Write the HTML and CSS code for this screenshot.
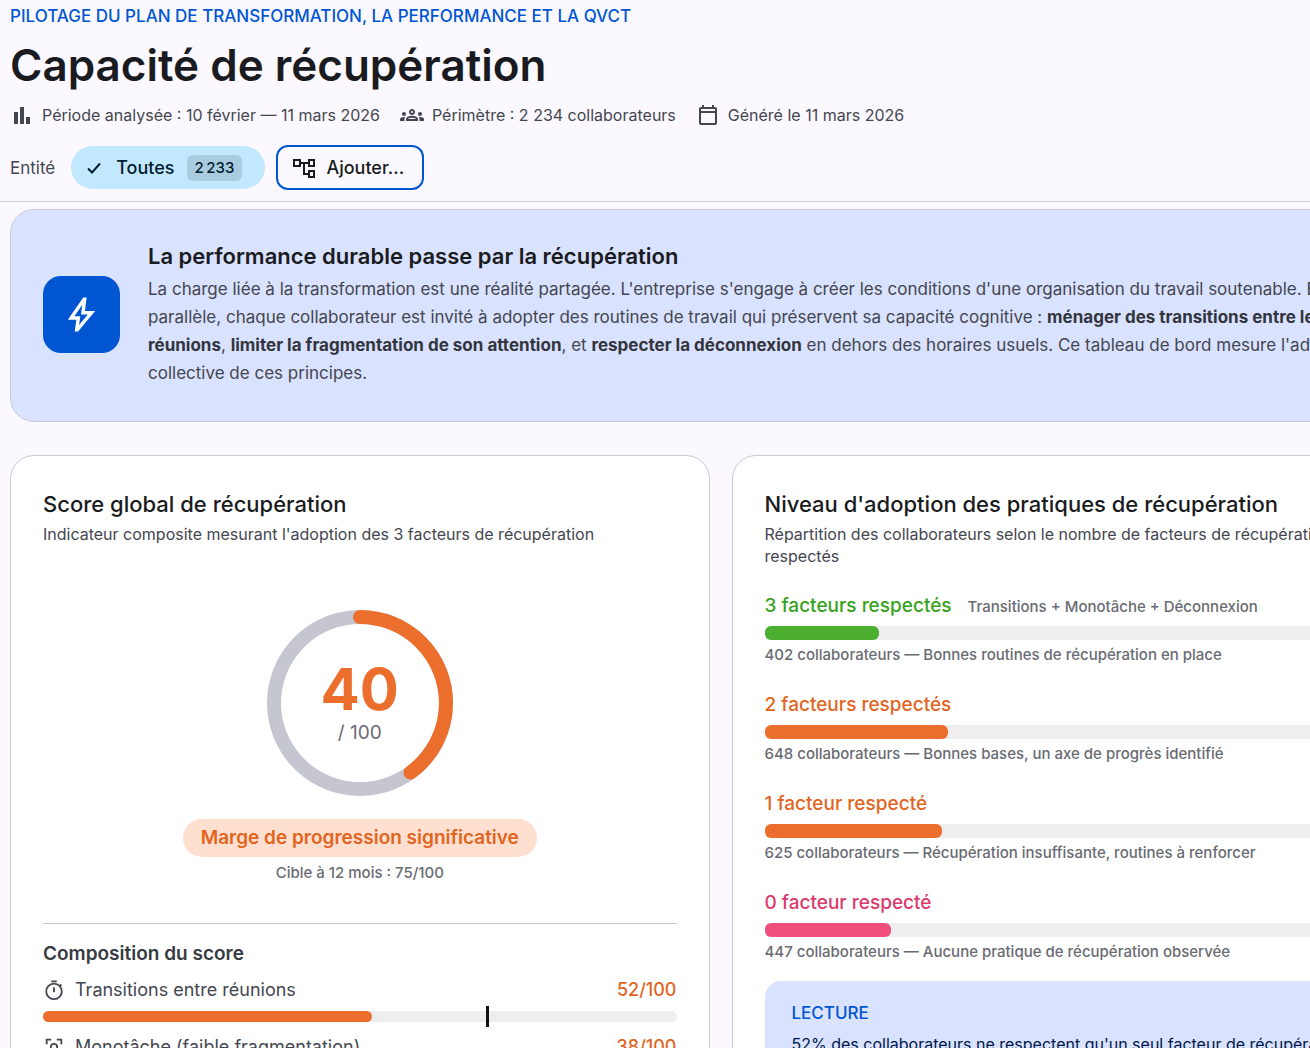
FILE: index.html
```html
<!DOCTYPE html>
<html lang="fr">
<head>
    <meta charset="UTF-8">
    <meta name="viewport" content="width=device-width, initial-scale=1.0">
    <title>Capacité de récupération</title>
    <link rel="stylesheet" href="styles.css">
</head>
<body>
    <header class="page-header">
        <p class="eyebrow">PILOTAGE DU PLAN DE TRANSFORMATION, LA PERFORMANCE ET LA QVCT</p>
        <h1>Capacité de récupération</h1>
        <div class="meta">
            <span class="meta-item">
                <svg class="icon" viewBox="0 0 24 24"><path d="M4 9h4v12H4zM10 4h4v17h-4zM16 14h4v7h-4z"/></svg>
                Période analysée : 10 février — 11 mars 2026
            </span>
            <span class="meta-item">
                <svg class="icon" viewBox="0 0 24 24"><path d="M4 13c1.1 0 2-.9 2-2s-.9-2-2-2-2 .9-2 2 .9 2 2 2zm1.13 1.1c-.37-.06-.74-.1-1.13-.1-.99 0-1.93.21-2.78.58A2.01 2.01 0 0 0 0 16.43V18h4.5v-1.61c0-.83.23-1.61.63-2.29zM20 13c1.1 0 2-.9 2-2s-.9-2-2-2-2 .9-2 2 .9 2 2 2zm4 3.43c0-.81-.48-1.53-1.22-1.85A6.95 6.95 0 0 0 20 14c-.39 0-.76.04-1.13.1.4.68.63 1.46.63 2.29V18H24v-1.57zM16.24 13.65c-1.17-.52-2.61-.9-4.24-.9s-3.07.39-4.24.9A2.99 2.99 0 0 0 6 16.39V18h12v-1.61c0-1.18-.68-2.26-1.76-2.74zM8.07 16c.09-.23.13-.39.91-.69.97-.38 1.99-.56 3.02-.56s2.05.18 3.02.56c.77.3.81.46.91.69H8.07zM12 8c.55 0 1 .45 1 1s-.45 1-1 1-1-.45-1-1 .45-1 1-1m0-2c-1.66 0-3 1.34-3 3s1.34 3 3 3 3-1.34 3-3-1.34-3-3-3z"/></svg>
                Périmètre : 2 234 collaborateurs
            </span>
            <span class="meta-item">
                <svg class="icon" viewBox="0 0 24 24"><path d="M5 22q-.8 0-1.4-.6T3 20V6q0-.8.6-1.4T5 4h1V2h2v2h8V2h2v2h1q.8 0 1.4.6T21 6v14q0 .8-.6 1.4T19 22zm0-2h14V10H5zm0-12h14V6H5z"/></svg>
                Généré le 11 mars 2026
            </span>
        </div>
        <div class="filters">
            <span class="filters-label">Entité</span>
            <button class="chip" type="button" aria-pressed="true">
                <svg class="chip-check" viewBox="0 0 16 16"><path d="M2 8.5l4 4 8-9"/></svg>
                Toutes
                <span class="chip-count">2&#8201;233</span>
            </button>
            <button class="add-button" type="button">
                <svg class="icon" viewBox="0 0 24 24"><path d="M23 11V3h-7v3H9V3H1v8h8V8h2v11h5v3h7v-8h-7v3h-3V8h3v3h7zM7 9H3V5h4v4zm11 7h3v4h-3v-4zm0-11h3v4h-3V5z"/></svg>
                Ajouter...
            </button>
        </div>
    </header>

    <main class="dashboard">
        <section class="banner">
            <div class="banner-icon">
                <svg viewBox="0 0 24 24"><path d="m10.55 18.2 5.175-6.2h-4l.725-5.675L7.825 13H11.3zM8 22l1-7H4l9-13h2l-1 8h6L10 22z"/></svg>
            </div>
            <div class="banner-text">
                <h2>La performance durable passe par la récupération</h2>
                <p>
                    La charge liée à la transformation est une réalité partagée. L'entreprise s'engage à créer les conditions d'une organisation du travail soutenable. En<br>
                    parallèle, chaque collaborateur est invité à adopter des routines de travail qui préservent sa capacité cognitive : <strong>ménager des transitions entre les<br>
                    réunions</strong>, <strong>limiter la fragmentation de son attention</strong>, et <strong>respecter la déconnexion</strong> en dehors des horaires usuels. Ce tableau de bord mesure l'adoption<br>
                    collective de ces principes.
                </p>
            </div>
        </section>

        <div class="cards">
            <section class="card">
                <h2>Score global de récupération</h2>
                <p class="subtitle">Indicateur composite mesurant l'adoption des 3 facteurs de récupération</p>

                <div class="score">
                    <div class="gauge">
                        <svg viewBox="0 0 186 186">
                            <circle class="gauge-track" cx="93" cy="93" r="86"/>
                            <circle class="gauge-value" cx="93" cy="93" r="86" pathLength="100" stroke-dasharray="40 100"/>
                        </svg>
                        <div class="gauge-label">
                            <span class="gauge-number">40</span>
                            <span class="gauge-max">/ 100</span>
                        </div>
                    </div>
                    <span class="badge">Marge de progression significative</span>
                    <span class="note">Cible à 12 mois : 75/100</span>
                </div>

                <div class="composition">
                    <h3>Composition du score</h3>
                    <div class="component">
                        <div class="component-head">
                            <svg class="icon-line" viewBox="0 0 24 24"><circle cx="12" cy="13.500" r="8.500"/><path d="M9 2.500h6M12 9v5.500M18 8l2-2"/></svg>
                            <span>Transitions entre réunions</span>
                            <span class="component-score">52/100</span>
                        </div>
                        <div class="bar bar-thin">
                            <div class="bar-fill orange" style="width: 52%"></div>
                            <div class="bar-target" style="left: 70%"></div>
                        </div>
                    </div>
                    <div class="component">
                        <div class="component-head">
                            <svg class="icon-line" viewBox="0 0 24 24"><path d="M4 9V4h5M15 4h5v5M20 15v5h-5M9 20H4v-5"/><circle cx="12" cy="12" r="3.500"/></svg>
                            <span>Monotâche (faible fragmentation)</span>
                            <span class="component-score">38/100</span>
                        </div>
                        <div class="bar bar-thin">
                            <div class="bar-fill orange" style="width: 38%"></div>
                            <div class="bar-target" style="left: 70%"></div>
                        </div>
                    </div>
                </div>
            </section>

            <section class="card">
                <h2>Niveau d'adoption des pratiques de récupération</h2>
                <p class="subtitle">Répartition des collaborateurs selon le nombre de facteurs de récupération<br>respectés</p>

                <div class="levels">
                    <div class="level">
                        <div class="level-head green">3 facteurs respectés <span class="note">Transitions + Monotâche + Déconnexion</span></div>
                        <div class="bar"><div class="bar-fill green" style="width: 18%"></div></div>
                        <p class="note">402 collaborateurs — Bonnes routines de récupération en place</p>
                    </div>
                    <div class="level">
                        <div class="level-head orange">2 facteurs respectés</div>
                        <div class="bar"><div class="bar-fill orange" style="width: 29%"></div></div>
                        <p class="note">648 collaborateurs — Bonnes bases, un axe de progrès identifié</p>
                    </div>
                    <div class="level">
                        <div class="level-head orange">1 facteur respecté</div>
                        <div class="bar"><div class="bar-fill orange" style="width: 28%"></div></div>
                        <p class="note">625 collaborateurs — Récupération insuffisante, routines à renforcer</p>
                    </div>
                    <div class="level">
                        <div class="level-head pink">0 facteur respecté</div>
                        <div class="bar"><div class="bar-fill pink" style="width: 20%"></div></div>
                        <p class="note">447 collaborateurs — Aucune pratique de récupération observée</p>
                    </div>
                </div>

                <div class="reading">
                    <h3>LECTURE</h3>
                    <p>52% des collaborateurs ne respectent qu'un seul facteur de récupération</p>
                </div>
            </section>
        </div>
    </main>
</body>
</html>
```
FILE: styles.css
```css
:root {
    --bg: #fbf9ff;
    --surface: #ffffff;
    --surface-blue: #d9e2ff;
    --text: #1a1b20;
    --text-secondary: #44464f;
    --text-muted: #696b72;
    --accent: #0056d2;
    --border: #c9cad4;
    --track: #efedf0;
    --orange: #ec6e2c;
    --orange-text: #e2651f;
    --green: #4caf30;
    --green-text: #38a31c;
    --pink: #f04e7b;
    --pink-text: #dd3a6b;
}

* {
    box-sizing: border-box;
}
body {
    margin: 0;
    height: 100vh;
    overflow: hidden;
    font-family: Inter, Roboto, sans-serif;
    font-size: 16px;
    color: var(--text);
    background: var(--bg);
}
h1, h2, h3, p {
    margin: 0;
}
button {
    font-family: inherit;
    cursor: pointer;
}

/* Header */
.page-header {
    padding: 4px 10px 11px;
    border-bottom: 1px solid var(--border);
}
.eyebrow {
    font-size: 17px;
    font-weight: 500;
    line-height: 24px;
    color: var(--accent);
}
h1 {
    margin-top: 11px;
    font-size: 44px;
    font-weight: 600;
    line-height: 52px;
}
.meta {
    display: flex;
    gap: 20px;
    margin-top: 12px;
    line-height: 24px;
    color: var(--text-secondary);
}
.meta-item {
    display: flex;
    align-items: center;
    gap: 8px;
    white-space: nowrap;
}
.icon {
    width: 24px;
    height: 24px;
    fill: currentColor;
}
.filters {
    display: flex;
    align-items: center;
    margin-top: 18px;
}
.filters-label {
    margin-right: 16px;
    font-size: 17px;
    color: var(--text-secondary);
}
.chip {
    display: flex;
    align-items: center;
    height: 43px;
    margin-right: 11px;
    padding: 0 23px 0 15px;
    border: none;
    border-radius: 22px;
    font-size: 18px;
    font-weight: 500;
    color: #001e2c;
    background: #c2e8ff;
}
.chip-check {
    width: 16px;
    height: 16px;
    margin-right: 14px;
    fill: none;
    stroke: currentColor;
    stroke-width: 2;
}
.chip-count {
    margin-left: 12px;
    padding: 0 8px;
    border-radius: 6px;
    font-size: 15px;
    line-height: 26px;
    background: #a9cce1;
}
.add-button {
    display: flex;
    align-items: center;
    gap: 10px;
    height: 45px;
    padding: 0 18px 0 14px;
    border: 2px solid var(--accent);
    border-radius: 12px;
    font-size: 18px;
    font-weight: 500;
    color: var(--text);
    background: transparent;
}

/* The dashboard runs past the right edge of the window */
.dashboard {
    width: 110%;
    padding: 7px 10px;
}
.banner {
    display: flex;
    align-items: center;
    gap: 28px;
    padding: 32px 32px 34px;
    border: 1px solid var(--border);
    border-radius: 24px;
    background: var(--surface-blue);
}
.banner-icon {
    display: flex;
    flex-shrink: 0;
    align-items: center;
    justify-content: center;
    width: 77px;
    height: 77px;
    border-radius: 18px;
    background: var(--accent);
}
.banner-icon svg {
    width: 41px;
    height: 41px;
    fill: white;
}
.banner-text h2 {
    font-size: 22px;
    font-weight: 600;
    line-height: 28px;
}
.banner-text p {
    margin-top: 5px;
    font-size: 17px;
    line-height: 28px;
    white-space: nowrap;
    color: var(--text-secondary);
}
.banner-text strong {
    font-weight: 700;
    color: #33353d;
}

/* Cards */
.cards {
    display: grid;
    grid-template-columns: 1fr 1fr;
    gap: 22px;
    margin-top: 33px;
}
.card {
    min-width: 0;
    padding: 32px;
    border: 1px solid var(--border);
    border-radius: 24px;
    background: var(--surface);
}
.card h2 {
    font-size: 22px;
    font-weight: 500;
    line-height: 32px;
}
.subtitle {
    margin-top: 3px;
    line-height: 22px;
    white-space: nowrap;
    color: var(--text-secondary);
}
.note {
    font-size: 15px;
    font-weight: 500;
    line-height: 22px;
    color: var(--text-muted);
}

/* Score gauge */
.score {
    display: flex;
    flex-direction: column;
    align-items: center;
    padding: 65px 0 39px;
}
.gauge {
    display: grid;
    width: 186px;
    height: 186px;
}
.gauge svg, .gauge-label {
    grid-area: 1 / 1;
}
.gauge svg {
    transform: rotate(-90deg);
    fill: none;
    stroke-width: 14;
}
.gauge-track {
    stroke: #c5c6d0;
}
.gauge-value {
    stroke: var(--orange);
    stroke-linecap: round;
}
.gauge-label {
    display: flex;
    flex-direction: column;
    align-items: center;
    justify-content: center;
}
.gauge-number {
    font-size: 58px;
    font-weight: 700;
    line-height: 60px;
    color: var(--orange);
}
.gauge-max {
    font-size: 19px;
    line-height: 28px;
    color: var(--text-muted);
}
.badge {
    margin: 23px 0 5px;
    padding: 0 18px;
    border-radius: 19px;
    font-size: 19px;
    font-weight: 600;
    line-height: 38px;
    color: var(--orange-text);
    background: #ffdfcf;
}

/* Score breakdown */
.composition {
    padding-top: 16px;
    border-top: 1px solid var(--border);
}
.composition h3 {
    font-size: 19px;
    font-weight: 600;
    line-height: 28px;
    color: #383a42;
}
.component {
    margin-top: 8px;
}
.component + .component {
    margin-top: 11px;
}
.component-head {
    display: flex;
    align-items: center;
    gap: 10px;
    margin-bottom: 7px;
    font-size: 18px;
    line-height: 28px;
    color: var(--text-secondary);
}
.component-score {
    margin-left: auto;
    font-weight: 500;
    color: var(--orange-text);
}
.icon-line {
    width: 22px;
    height: 22px;
    fill: none;
    stroke: currentColor;
    stroke-width: 2;
}

/* Bars */
.bar {
    position: relative;
    height: 14px;
    border-radius: 7px;
    background: var(--track);
}
.bar-thin {
    height: 11px;
}
.bar-fill {
    height: 100%;
    border-radius: 6px;
}
.bar-fill.orange {
    background: var(--orange);
}
.bar-fill.green {
    background: var(--green);
}
.bar-fill.pink {
    background: var(--pink);
}
.bar-target {
    position: absolute;
    top: -5px;
    bottom: -5px;
    width: 3px;
    background: #111216;
}

/* Adoption levels */
.levels {
    display: flex;
    flex-direction: column;
    gap: 25px;
    margin-top: 25px;
}
.level-head {
    display: flex;
    align-items: baseline;
    gap: 16px;
    margin-bottom: 6px;
    font-size: 19px;
    font-weight: 500;
    line-height: 28px;
}
.level-head.green {
    color: var(--green-text);
}
.level-head.orange {
    color: var(--orange-text);
}
.level-head.pink {
    color: var(--pink-text);
}
.level .bar + .note {
    margin-top: 4px;
}
.reading {
    margin-top: 18px;
    padding: 20px 27px;
    border-radius: 16px;
    background: var(--surface-blue);
}
.reading h3 {
    font-size: 17px;
    font-weight: 500;
    line-height: 24px;
    color: var(--accent);
}
.reading p {
    margin-top: 5px;
    line-height: 28px;
    white-space: nowrap;
    color: #00174b;
}
```
